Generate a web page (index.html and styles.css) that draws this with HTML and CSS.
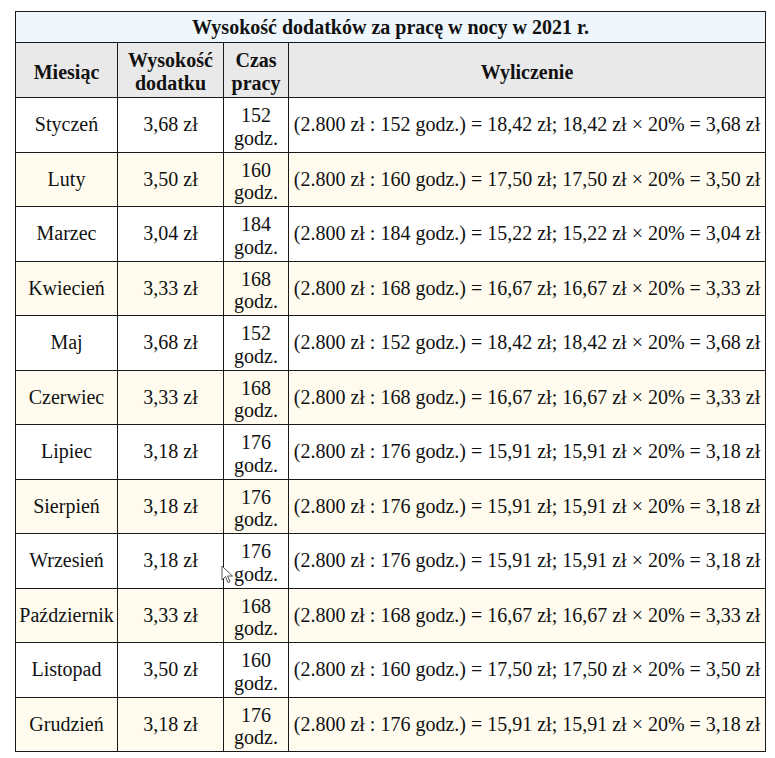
FILE: index.html
```html
<!DOCTYPE html>
<html lang="pl">
<head>
<meta charset="utf-8">
<title>Wysokość dodatków za pracę w nocy w 2021 r.</title>
<link rel="stylesheet" href="styles.css">
</head>
<body>
<div class="page">
<table class="night-table">
<colgroup>
<col class="c-month"><col class="c-amount"><col class="c-hours"><col class="c-calc">
</colgroup>
<thead>
<tr class="title-row"><th colspan="4">Wysokość dodatków za pracę w nocy w 2021 r.</th></tr>
<tr class="head-row"><th>Miesiąc</th><th>Wysokość dodatku</th><th>Czas pracy</th><th>Wyliczenie</th></tr>
</thead>
<tbody>
<tr><td>Styczeń</td><td>3,68 zł</td><td class="hours">152 godz.</td><td class="calc">(2.800 zł : 152 godz.) = 18,42 zł; 18,42 zł × 20% = 3,68 zł</td></tr>
<tr class="alt"><td>Luty</td><td>3,50 zł</td><td class="hours">160 godz.</td><td class="calc">(2.800 zł : 160 godz.) = 17,50 zł; 17,50 zł × 20% = 3,50 zł</td></tr>
<tr><td>Marzec</td><td>3,04 zł</td><td class="hours">184 godz.</td><td class="calc">(2.800 zł : 184 godz.) = 15,22 zł; 15,22 zł × 20% = 3,04 zł</td></tr>
<tr class="alt"><td>Kwiecień</td><td>3,33 zł</td><td class="hours">168 godz.</td><td class="calc">(2.800 zł : 168 godz.) = 16,67 zł; 16,67 zł × 20% = 3,33 zł</td></tr>
<tr><td>Maj</td><td>3,68 zł</td><td class="hours">152 godz.</td><td class="calc">(2.800 zł : 152 godz.) = 18,42 zł; 18,42 zł × 20% = 3,68 zł</td></tr>
<tr class="alt"><td>Czerwiec</td><td>3,33 zł</td><td class="hours">168 godz.</td><td class="calc">(2.800 zł : 168 godz.) = 16,67 zł; 16,67 zł × 20% = 3,33 zł</td></tr>
<tr><td>Lipiec</td><td>3,18 zł</td><td class="hours">176 godz.</td><td class="calc">(2.800 zł : 176 godz.) = 15,91 zł; 15,91 zł × 20% = 3,18 zł</td></tr>
<tr class="alt"><td>Sierpień</td><td>3,18 zł</td><td class="hours">176 godz.</td><td class="calc">(2.800 zł : 176 godz.) = 15,91 zł; 15,91 zł × 20% = 3,18 zł</td></tr>
<tr><td>Wrzesień</td><td>3,18 zł</td><td class="hours">176 godz.</td><td class="calc">(2.800 zł : 176 godz.) = 15,91 zł; 15,91 zł × 20% = 3,18 zł</td></tr>
<tr class="alt"><td>Październik</td><td>3,33 zł</td><td class="hours">168 godz.</td><td class="calc">(2.800 zł : 168 godz.) = 16,67 zł; 16,67 zł × 20% = 3,33 zł</td></tr>
<tr><td>Listopad</td><td>3,50 zł</td><td class="hours">160 godz.</td><td class="calc">(2.800 zł : 160 godz.) = 17,50 zł; 17,50 zł × 20% = 3,50 zł</td></tr>
<tr class="alt"><td>Grudzień</td><td>3,18 zł</td><td class="hours">176 godz.</td><td class="calc">(2.800 zł : 176 godz.) = 15,91 zł; 15,91 zł × 20% = 3,18 zł</td></tr>
</tbody>
</table>
</div>
<svg class="cursor" width="13" height="20" viewBox="0 0 13 20" aria-hidden="true">
<path d="M1 1 L1 15 L4.5 11.5 L7 17.5 L9 16.6 L6.6 11 L11.5 11 Z" fill="#ffffff" stroke="#555555" stroke-width="1" stroke-linejoin="round"/>
</svg>
</body>
</html>
```
FILE: styles.css
```css
html, body {
  margin: 0;
  padding: 0;
  background: #ffffff;
}
.page {
  padding: 11px 0 0 15px;
}
.night-table {
  border-collapse: collapse;
  table-layout: fixed;
  width: 750px;
  font-family: "Liberation Serif", "Times New Roman", serif;
  font-size: 20px;
  line-height: 22.75px;
  color: #111111;
}
.c-month { width: 102px; }
.c-amount { width: 106px; }
.c-hours { width: 65px; }
.c-calc { width: 477px; }
.night-table th,
.night-table td {
  border: 1px solid #1a1a1a;
  text-align: center;
  vertical-align: middle;
  padding: 4px 0;
}
.title-row th {
  background: #eff7fc;
  line-height: 23px;
  padding: 4px 2px 3px;
}
.head-row th {
  background: #e9e9e9;
  line-height: 23px;
  padding: 6px 0 2px;
}
.night-table td.hours {
  padding: 6px 0 2px;
}
.night-table td.calc {
  white-space: nowrap;
  padding: 4px 0;
}
.night-table tr.alt td {
  background: #fffcef;
}
.cursor {
  position: absolute;
  left: 221px;
  top: 565px;
}
```
